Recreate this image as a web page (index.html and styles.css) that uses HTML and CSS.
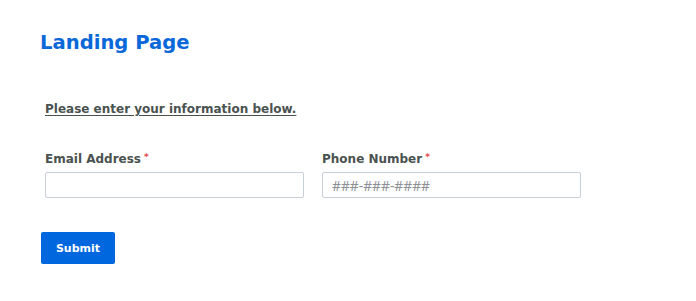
FILE: index.html
```html
<!DOCTYPE html>
<html>
<head>
<meta charset="utf-8">
<link rel="stylesheet" href="styles.css">
</head>
<body>
<main class="page">
  <h1 class="title">Landing Page</h1>
  <form class="form">
    <p class="intro">Please enter your information below.</p>
    <div class="fields">
      <div class="field">
        <label class="label">Email Address<span class="req">*</span></label>
        <input class="input" type="text">
      </div>
      <div class="field">
        <label class="label">Phone Number<span class="req">*</span></label>
        <input class="input" type="text" placeholder="###-###-####">
      </div>
    </div>
    <button class="submit" type="button">Submit</button>
  </form>
</main>
</body>
</html>
```

FILE: styles.css
```css
html, body {
  margin: 0;
  padding: 0;
  background: #ffffff;
}
body {
  font-family: "DejaVu Sans", sans-serif;
}
.page {
  padding: 30px 40px 0 40px;
}
.title {
  margin: 0;
  font-size: 19.6px;
  line-height: 26px;
  font-weight: 700;
  color: #0b68d9;
}
.form {
  margin: 0;
}
.intro {
  margin: 45px 0 0 5px;
  font-size: 12px;
  line-height: 16px;
  font-weight: 700;
  color: #4a524f;
  text-decoration: underline;
  text-underline-offset: 2px;
}
.fields {
  display: flex;
  gap: 18px;
  margin: 34px 0 0 5px;
}
.field {
  display: flex;
  flex-direction: column;
  width: 259px;
}
.label {
  font-size: 12px;
  line-height: 16px;
  font-weight: 700;
  color: #4a524f;
  margin-bottom: 5px;
}
.req {
  color: #e5484d;
  font-size: 9px;
  vertical-align: top;
  margin-left: 3px;
  position: relative;
  top: -2px;
}
.input {
  box-sizing: border-box;
  height: 26px;
  width: 100%;
  margin: 0;
  border: 1px solid #c9cfd9;
  border-radius: 2px;
  padding: 0 9px;
  font-family: "Noto Sans", sans-serif;
  font-size: 13.8px;
  color: #333;
  background: #fff;
  outline: none;
}
.input::placeholder {
  color: #8d9196;
}
.submit {
  display: block;
  margin: 34px 0 0 1px;
  width: 74px;
  height: 32px;
  border: none;
  border-radius: 2px;
  background: #0067de;
  color: #ffffff;
  font-family: "DejaVu Sans", sans-serif;
  font-size: 11px;
  font-weight: 700;
  padding: 0;
}
```
